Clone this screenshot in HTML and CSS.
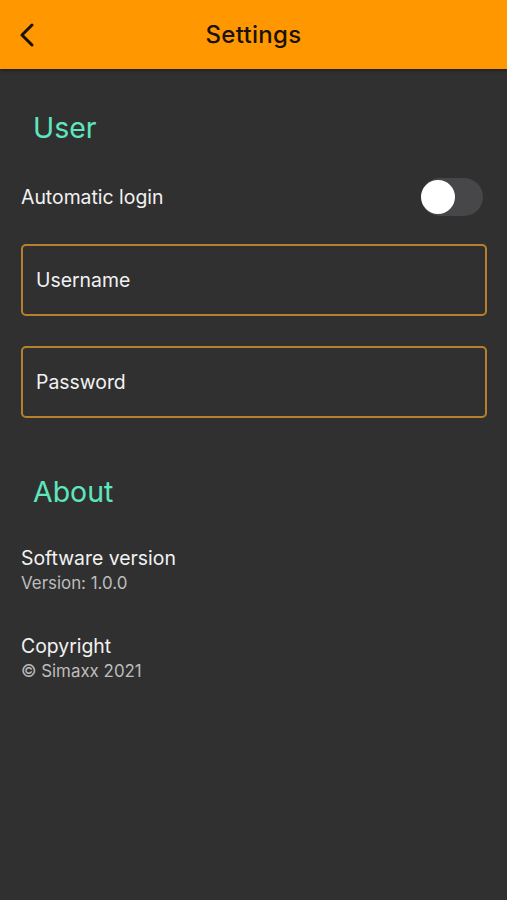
FILE: index.html
```html
<!DOCTYPE html>
<html>
<head>
<meta charset="utf-8">
<link rel="stylesheet" href="styles.css">
</head>
<body>
<header class="appbar">
  <svg class="back" width="16" height="24" viewBox="0 0 16 24"><path d="M13 2 L3 12 L13 22" fill="none" stroke="#1a1208" stroke-width="3" stroke-linecap="round" stroke-linejoin="round"/></svg>
  <h1 class="title">Settings</h1>
</header>
<main class="content">
  <h2 class="section-title user-title">User</h2>
  <div class="row">
    <span class="label">Automatic login</span>
    <span class="switch"><span class="thumb"></span></span>
  </div>
  <div class="field">Username</div>
  <div class="field">Password</div>
  <h2 class="section-title about-title">About</h2>
  <div class="info">
    <div class="label">Software version</div>
    <div class="sub">Version: 1.0.0</div>
  </div>
  <div class="info">
    <div class="label">Copyright</div>
    <div class="sub">© Simaxx 2021</div>
  </div>
</main>
</body>
</html>
```
FILE: styles.css
```css
html, body {
  margin: 0;
  padding: 0;
  height: 100%;
  background: #303030;
  font-family: Inter, "Noto Sans", "Liberation Sans", sans-serif;
}
.appbar {
  height: 69px;
  background: #ff9800;
  display: flex;
  align-items: center;
  justify-content: center;
  position: relative;
  box-shadow: 0 1px 3px rgba(0,0,0,0.5);
}
.back {
  position: absolute;
  left: 19px;
  top: 23px;
}
.title {
  margin: 0;
  font-size: 24px;
  font-weight: 500;
  color: #1a1208;
  letter-spacing: 0.3px;
}
.content {
  padding: 0 20px 0 21px;
}
.section-title {
  margin: 0;
  font-weight: 400;
  font-size: 28.5px;
  color: #5ee6be;
  padding-left: 12px;
  line-height: 34px;
}
.user-title { margin-top: 42px; }
.row {
  display: flex;
  align-items: center;
  justify-content: space-between;
  margin-top: 33px;
  height: 38px;
}
.label {
  font-size: 19.4px;
  color: #f2f2f2;
  line-height: 24px;
}
.switch {
  width: 62px;
  height: 38px;
  border-radius: 19px;
  background: #474749;
  position: relative;
  margin-right: 4px;
}
.thumb {
  position: absolute;
  left: 0;
  top: 2px;
  width: 34px;
  height: 34px;
  border-radius: 50%;
  background: #ffffff;
}
.field {
  box-sizing: border-box;
  height: 72px;
  border: 2px solid #b8802c;
  border-radius: 5px;
  display: flex;
  align-items: center;
  padding-left: 13px;
  font-size: 19.4px;
  color: #f2f2f2;
  margin-top: 30px;
}
.row + .field { margin-top: 28px; }
.about-title { margin-top: 57px; }
.info { margin-top: 41px; }
.about-title + .info { margin-top: 37px; }
.sub {
  font-size: 16.9px;
  color: #bdbdbd;
  line-height: 20px;
  margin-top: 3px;
}
```
